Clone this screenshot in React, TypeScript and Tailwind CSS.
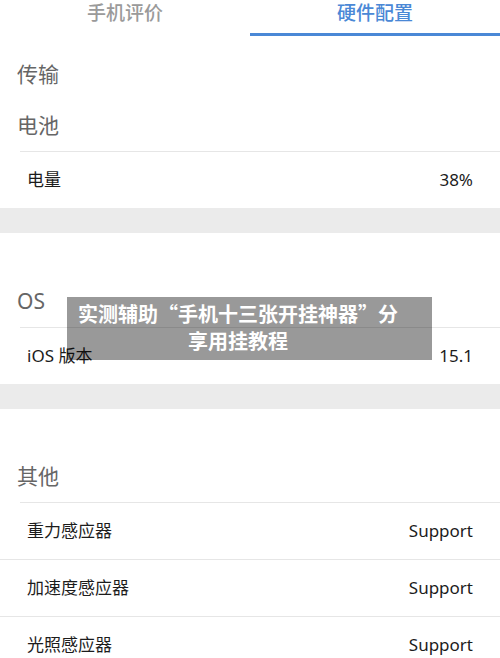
import React from 'react';

const font = { fontFamily: '"Noto Sans", "Noto Sans CJK SC", sans-serif' };
const cjk = { fontFamily: '"Noto Sans CJK SC", sans-serif' };

type Row = { label: string; value: string };

function SectionHeader({ title }: { title: string }) {
  return (
    <div className="h-[51px] flex items-center px-[17px] text-[21px] text-[#666666]">
      {title}
    </div>
  );
}

function InfoRow({ row }: { row: Row }) {
  return (
    <div className="h-[56px] flex items-center justify-between px-[27px] text-[17px] text-[#1c1c1c]">
      <span>{row.label}</span>
      <span>{row.value}</span>
    </div>
  );
}

export default function App() {
  const sensors: Row[] = [
    { label: '重力感应器', value: 'Support' },
    { label: '加速度感应器', value: 'Support' },
    { label: '光照感应器', value: 'Support' },
  ];

  return (
    <div className="relative w-[500px] h-[658px] overflow-hidden bg-white" style={font}>
      {/* Tabs */}
      <div className="flex h-[36px]">
        <div className="flex-1 flex justify-center">
          <span className="leading-[26px] text-[19px] font-medium text-[#9a9a9a]">手机评价</span>
        </div>
        <div className="flex-1 flex justify-center border-b-[3px] border-[#4a88d6]">
          <span className="leading-[26px] text-[19px] font-medium text-[#4a88d6]">硬件配置</span>
        </div>
      </div>

      <div className="h-[13px]" />
      <SectionHeader title="传输" />
      <SectionHeader title="电池" />
      <div className="ml-[20px] border-t border-[#e6e6e6]" />
      <InfoRow row={{ label: '电量', value: '38%' }} />

      <div className="h-[25px] bg-[#ebebeb]" />
      <div className="h-[43px]" />
      <SectionHeader title="OS" />
      <div className="ml-[20px] border-t border-[#e6e6e6]" />
      <InfoRow row={{ label: 'iOS 版本', value: '15.1' }} />

      <div className="h-[25px] bg-[#ebebeb]" />
      <div className="h-[42px]" />
      <SectionHeader title="其他" />
      <div className="ml-[20px] border-t border-[#e6e6e6]" />
      {sensors.map((s, i) => (
        <div key={s.label}>
          {i > 0 && <div className="border-t border-[#e6e6e6]" />}
          <InfoRow row={s} />
        </div>
      ))}

      {/* Watermark caption */}
      <div className="absolute left-[67px] top-[297px] w-[365px] bg-black/40 pl-[10px] pr-[33px] pt-[3px] pb-[6px]">
        <p className="text-center text-white font-bold text-[20px] leading-[27px]" style={cjk}>
          实测辅助“手机十三张开挂神器”分享用挂教程
        </p>
      </div>
    </div>
  );
}
